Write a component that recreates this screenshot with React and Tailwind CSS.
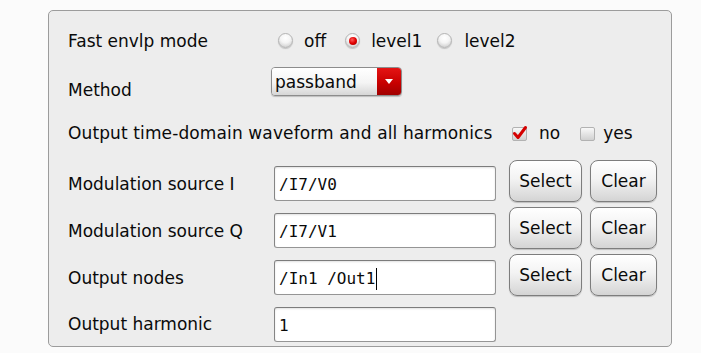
import React from "react";

function Radio({ checked }) {
  return (
    <span className="w-[15px] h-[15px] rounded-full border border-[#b4b4b4] bg-[radial-gradient(circle_at_50%_30%,#ffffff_0%,#f4f4f4_45%,#c2c2c2_100%)] shadow-[0_1px_1px_rgba(0,0,0,0.18)] flex items-center justify-center shrink-0">
      {checked && (
        <span className="w-[8px] h-[8px] rounded-full bg-[radial-gradient(circle_at_40%_35%,#ff5a5a_0%,#e00000_50%,#9a0000_100%)]" />
      )}
    </span>
  );
}

function Check({ checked, id }) {
  return (
    <svg width="17" height="17" viewBox="0 0 17 17" className="shrink-0">
      <defs>
        <linearGradient id={id} x1="0" y1="0" x2="0" y2="1">
          <stop offset="0" stopColor="#fafafa" />
          <stop offset="1" stopColor="#cfcfcf" />
        </linearGradient>
      </defs>
      <rect x="1.5" y="2.5" width="14" height="13" rx="1.5" fill={`url(#${id})`} stroke="#b2b2b2" />
      {checked && (
        <path
          d="M3.5 8.5 L7 12.5 L14.5 2.5"
          stroke="#d40000"
          strokeWidth="3"
          fill="none"
          strokeLinecap="round"
          strokeLinejoin="round"
        />
      )}
    </svg>
  );
}

function Field({ value, cursor }) {
  return (
    <div className="w-[222px] h-[35px] shrink-0 bg-white border border-[#959595] border-t-[#7c7c7c] border-l-[#858585] rounded-[3px] shadow-[inset_0_1px_2px_rgba(0,0,0,0.12)] pl-[4px] pt-[3px] flex items-center font-['DejaVu_Sans_Mono',monospace] text-[16px] whitespace-pre">
      <span>{value}</span>
      {cursor && <span className="w-[1px] h-[22px] bg-black ml-[1px]" />}
    </div>
  );
}

function Btn({ children, wide }) {
  return (
    <div
      className={
        (wide ? "w-[73px]" : "w-[67px]") +
        " h-[42px] mb-[6px] shrink-0 rounded-[8px] border border-[#7d7d7d] bg-[linear-gradient(#ffffff_0%,#f3f3f3_45%,#d4d4d4_100%)] shadow-[0_1px_1px_rgba(0,0,0,0.2)] flex items-center justify-center"
      }
    >
      {children}
    </div>
  );
}

function FieldRow({ label, value, cursor, buttons, h }) {
  return (
    <div className={(h ? "h-[46px]" : "h-[47px]") + " flex items-center"}>
      <div className="w-[206px] shrink-0">{label}</div>
      <Field value={value} cursor={cursor} />
      {buttons && (
        <div className="flex items-center gap-[8px] ml-[13px]">
          <Btn wide>Select</Btn>
          <Btn>Clear</Btn>
        </div>
      )}
    </div>
  );
}

export default function App() {
  return (
    <div className="w-[701px] h-[353px] bg-[#fbfbfb] pt-[10px] pl-[48px] font-['DejaVu_Sans',sans-serif] text-[17px] leading-[20px] text-[#0a0a0a]">
      <div className="w-[624px] h-[337px] border border-[#9c9c9c] rounded-[5px] bg-[#ededed] pl-[19px] pt-[5px]">
        {/* Row 1 */}
        <div className="h-[49px] flex items-center">
          <div className="w-[210px] shrink-0">Fast envlp mode</div>
          <Radio />
          <span className="ml-[11px]">off</span>
          <span className="ml-[19px]">
            <Radio checked />
          </span>
          <span className="ml-[11px]">level1</span>
          <span className="ml-[15px]">
            <Radio />
          </span>
          <span className="ml-[12px]">level2</span>
        </div>
        {/* Row 2 */}
        <div className="h-[46px] flex items-center">
          <div className="w-[203px] shrink-0 mt-[4px]">Method</div>
          <div className="mb-[13px] w-[131px] h-[29px] flex rounded-[4px] border border-[#8c8c8c] overflow-hidden shadow-[0_1px_1px_rgba(0,0,0,0.2)]">
            <div className="flex-1 bg-[linear-gradient(#ffffff_0%,#f4f4f4_55%,#d6d6d6_100%)] pl-[3px] flex items-center">
              passband
            </div>
            <div className="w-[24px] bg-[linear-gradient(#e41414_0%,#c80000_55%,#a00000_100%)] flex items-center justify-center">
              <svg width="8" height="5" viewBox="0 0 8 5">
                <path d="M0 0H8L4 5Z" fill="#ffffff" />
              </svg>
            </div>
          </div>
        </div>
        {/* Row 3 */}
        <div className="h-[44px] flex items-center">
          <span className="w-[443px] shrink-0 tracking-[0.12px]">Output time-domain waveform and all harmonics</span>
          <span className="flex items-center">
            <Check checked id="cb1" />
          </span>
          <span className="ml-[11px]">no</span>
          <span className="ml-[19px] flex items-center">
            <Check id="cb2" />
          </span>
          <span className="ml-[7px]">yes</span>
        </div>
        <div className="mt-[5px]">
          <FieldRow label="Modulation source I" value="/I7/V0" buttons />
          <FieldRow label="Modulation source Q" value="/I7/V1" buttons />
          <FieldRow label="Output nodes" value="/In1 /Out1" cursor buttons />
          <FieldRow label="Output harmonic" value="1" h />
        </div>
      </div>
    </div>
  );
}
